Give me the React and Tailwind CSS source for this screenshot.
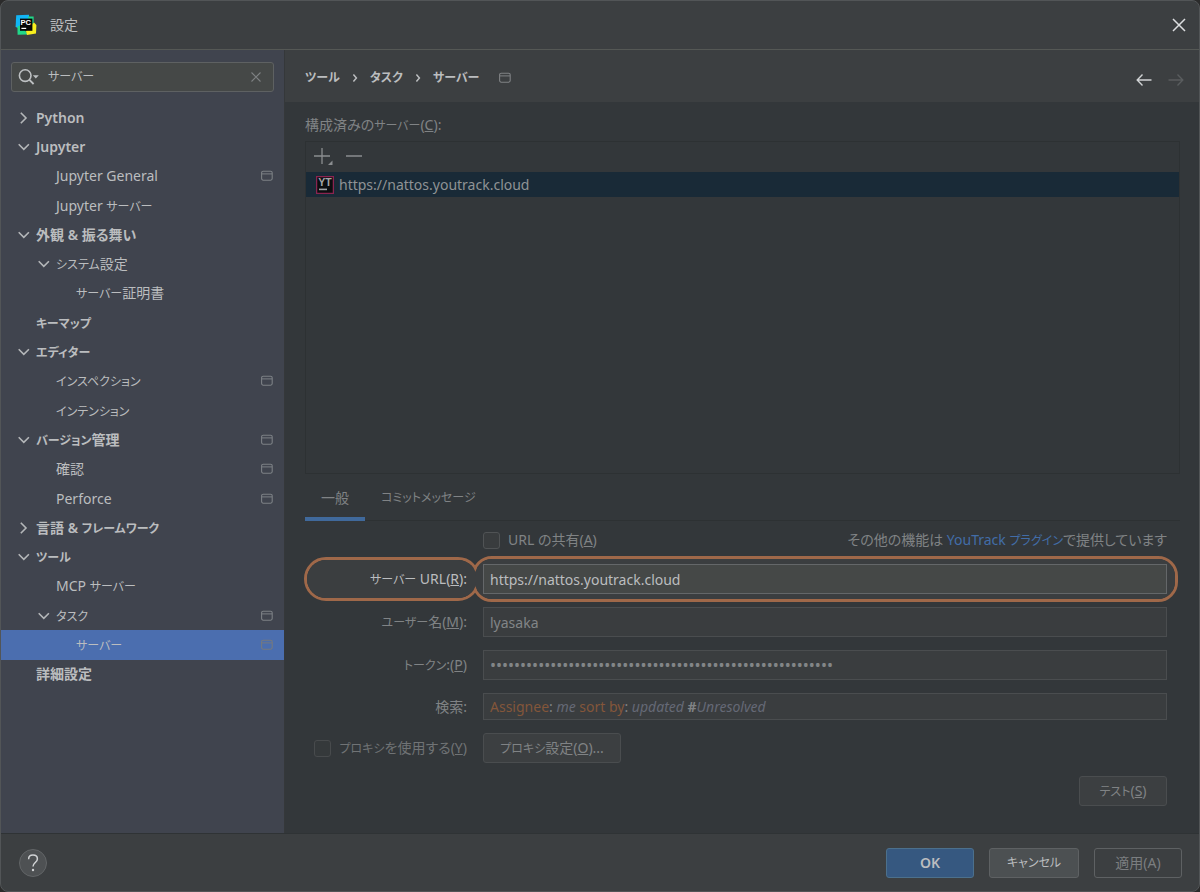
import React from "react";

const TREE = [
  { label: "Python", level: 0, state: "closed", bold: true },
  { label: "Jupyter", level: 0, state: "open", bold: true },
  { label: "Jupyter General", level: 1, project: true },
  { label: "Jupyter サーバー", level: 1 },
  { label: "外観 & 振る舞い", level: 0, state: "open", bold: true },
  { label: "システム設定", level: 1, state: "open" },
  { label: "サーバー証明書", level: 2 },
  { label: "キーマップ", level: 0, bold: true },
  { label: "エディター", level: 0, state: "open", bold: true },
  { label: "インスペクション", level: 1, project: true },
  { label: "インテンション", level: 1 },
  { label: "バージョン管理", level: 0, state: "open", bold: true, project: true },
  { label: "確認", level: 1, project: true },
  { label: "Perforce", level: 1, project: true },
  { label: "言語 & フレームワーク", level: 0, state: "closed", bold: true },
  { label: "ツール", level: 0, state: "open", bold: true },
  { label: "MCP サーバー", level: 1 },
  { label: "タスク", level: 1, state: "open", project: true },
  { label: "サーバー", level: 2, selected: true, project: true },
  { label: "詳細設定", level: 0, bold: true },
];

const INDENT = ["pl-[15px]", "pl-[35px]", "pl-[55px]"];

// Katakana runs are set one step smaller than kanji and Latin text.
function Kana({ children }) {
  return children.split(/([ァ-ヶー]+)/).map((part, index) =>
    index % 2 ? (
      <span key={index} className="text-xs">
        {part}
      </span>
    ) : (
      part
    ),
  );
}

function ProjectIcon({ className }) {
  return (
    <svg className={className} width="12" height="12" viewBox="0 0 12 12" fill="none" stroke="currentColor" aria-hidden="true">
      <rect x="0.6" y="1.2" width="10.6" height="9" rx="1.6" strokeWidth="1.1" />
      <path d="M1 3.9h10" strokeWidth="1" />
    </svg>
  );
}

function TreeArrow({ state }) {
  return (
    <svg width="16" height="16" viewBox="0 0 16 16" fill="none" stroke="#b4b7b9" strokeWidth="1.6" aria-hidden="true">
      {state === "open" && <path d="M2.7 5.2 7.8 10.3 12.9 5.2" />}
      {state === "closed" && <path d="M4.8 2.8 10 8 4.8 13.2" />}
    </svg>
  );
}

function Separator() {
  return (
    <svg width="6" height="10" viewBox="0 0 6 10" fill="none" stroke="#bbbdbf" strokeWidth="1.5" aria-hidden="true">
      <path d="M1.4 1.6 4.4 5 1.4 8.4" />
    </svg>
  );
}

function AppLogo() {
  return (
    <svg width="22" height="22" viewBox="0 0 22 22" aria-hidden="true">
      <path d="M1.2 1.2 14 0.8 14.5 12 4.5 14.5 0.6 13z" fill="#12b5f5" />
      <path d="M13 2.4h5.6V10l-4 4z" fill="#21d789" />
      <path d="M2.4 12.5 6 11l7 9.6-10.4.2z" fill="#21d789" />
      <path d="M19 8.4 21.4 11 21 19.4 12 21 11 17z" fill="#f7ee1e" />
      <rect x="5" y="4.6" width="12.4" height="12.2" fill="#060606" />
      <text x="5.4" y="11" fontSize="7.6" fontWeight="700" fill="#fff" fontFamily="Liberation Sans, sans-serif">PC</text>
      <rect x="6.4" y="13.8" width="4.8" height="1.2" fill="#fff" />
    </svg>
  );
}

function YouTrackLogo() {
  return (
    <svg width="18" height="18" viewBox="0 0 18 18" aria-hidden="true">
      <rect x="0.6" y="0.6" width="16.8" height="16.8" fill="#0c0e10" stroke="#8a2450" strokeWidth="1.3" />
      <text x="2.3" y="10.4" fontSize="10.6" fontWeight="700" fill="#a2a5a8" fontFamily="Liberation Sans, sans-serif">YT</text>
      <rect x="3" y="12.6" width="8" height="1.6" fill="#a2a5a8" />
    </svg>
  );
}

function CheckBox({ id, children, faint }) {
  return (
    <div className="flex items-center gap-2">
      <input
        id={id}
        type="checkbox"
        className={
          faint
            ? "size-[17px] shrink-0 appearance-none rounded-[3px] border border-[#484b4d] bg-[#35393b]"
            : "size-[17px] shrink-0 appearance-none rounded-[3px] border border-[#505355] bg-[#393c3e]"
        }
      />
      <label htmlFor={id} className={faint ? "whitespace-nowrap text-[#707375]" : "whitespace-nowrap text-[#808385]"}>
        {children}
      </label>
    </div>
  );
}

const FIELD =
  "block h-[30px] w-full border border-[#4a4d4f] bg-[#3a3d3f] px-[6px] text-[#828587] outline-none";

export default function App() {
  return (
    <div className="flex min-h-screen flex-col bg-[#2b2b2b] font-['Noto_Sans','Noto_Sans_CJK_JP',sans-serif] text-sm text-[#bbbdbf] [font-feature-settings:'palt']">
      <div className="flex flex-1 flex-col overflow-hidden rounded-lg border border-[#525557] bg-[#3c3f41]">
        <header className="flex h-[49px] shrink-0 items-center justify-between border-b border-[#555855] pr-3 pl-[14px]">
          <div className="flex items-center gap-[13px]">
            <AppLogo />
            <h1>設定</h1>
          </div>
          <button type="button" aria-label="閉じる" className="flex size-4 items-center justify-center">
            <svg width="16" height="16" viewBox="0 0 16 16" fill="none" stroke="#dcdee0" strokeWidth="1.5">
              <path d="M2 2 14 14M14 2 2 14" />
            </svg>
          </button>
        </header>

        <div className="flex flex-1">
          <aside className="w-[284px] shrink-0 border-r border-[#35383a] bg-[#40444e]">
            <div className="px-[10px] pt-3">
              <div className="flex h-[30px] items-center rounded-[3px] border border-[#5e6162] bg-[#454847] pr-[11px] pl-[6px]">
                <svg width="22" height="18" viewBox="0 0 22 18" fill="none" aria-hidden="true">
                  <circle cx="7.2" cy="7.6" r="5.8" stroke="#bdc0c2" strokeWidth="1.6" />
                  <path d="M11.4 11.8 15.6 16" stroke="#bdc0c2" strokeWidth="1.8" />
                  <path d="M14.8 7.2h6l-3 3.2z" fill="#bdc0c2" />
                </svg>
                <input
                  type="text"
                  aria-label="検索"
                  defaultValue="サーバー"
                  className="ml-2 min-w-0 flex-1 bg-transparent text-xs outline-none [font-feature-settings:'palt']"
                />
                <button type="button" aria-label="クリア" className="flex size-3 items-center justify-center">
                  <svg width="12" height="12" viewBox="0 0 12 12" fill="none" stroke="#7d8082" strokeWidth="1.1">
                    <path d="M1.5 1.5 10.5 10.5M10.5 1.5 1.5 10.5" />
                  </svg>
                </button>
              </div>
            </div>
            <ul className="mt-[11px] grid h-[586px] auto-rows-fr">
              {TREE.map((item, index) => (
                <li key={index} className="min-h-0">
                  <button
                    type="button"
                    className={
                      "flex h-full w-full items-center pr-[11px] text-left " +
                      INDENT[item.level] +
                      (item.selected ? " bg-[#4b6eaf]" : "") +
                      (item.bold ? " font-semibold" : "")
                    }
                  >
                    <TreeArrow state={item.state} />
                    <span className="ml-1 flex-1">
                      <Kana>{item.label}</Kana>
                    </span>
                    {item.project && <ProjectIcon className={item.selected ? "text-[#75797f]" : "text-[#7c8085]"} />}
                  </button>
                </li>
              ))}
            </ul>
          </aside>

          <main className="flex min-w-0 flex-1 flex-col bg-[#33373a]">
            <div className="flex h-[52px] shrink-0 items-center justify-between bg-[#3c3f41] pt-1 pr-[15px] pl-5">
              <nav className="flex items-center gap-3 text-xs font-semibold">
                <a href="#tools">ツール</a>
                <Separator />
                <a href="#tasks">タスク</a>
                <Separator />
                <a href="#servers">サーバー</a>
                <ProjectIcon className="ml-2 text-[#7f8284]" />
              </nav>
              <div className="flex gap-4 pt-1">
                <button type="button" aria-label="戻る">
                  <svg width="16" height="14" viewBox="0 0 16 14" fill="none" stroke="#d0d2d4" strokeWidth="1.4">
                    <path d="M15.5 7H1.5M6.5 1.6 1.2 7 6.5 12.4" />
                  </svg>
                </button>
                <button type="button" aria-label="進む">
                  <svg width="16" height="14" viewBox="0 0 16 14" fill="none" stroke="#595c5e" strokeWidth="1.4">
                    <path d="M0.5 7H14.5M9.5 1.6 14.8 7 9.5 12.4" />
                  </svg>
                </button>
              </div>
            </div>

            <div className="flex flex-1 flex-col pt-[11px] pr-[19px] pb-[27px] pl-5 text-[#808385]">
              <h2 className="h-[28px] leading-6">
                <Kana>構成済みのサーバー</Kana>(<u>C</u>):
              </h2>
              <section className="flex min-h-[200px] flex-1 flex-col border border-[#2d3133]">
                <div className="flex h-[30px] items-center gap-3 pb-[2px] pl-2">
                  <button type="button" aria-label="追加">
                    <svg width="20" height="20" viewBox="0 0 20 20" fill="none" stroke="#8b8e90" strokeWidth="1.3">
                      <path d="M0 10h16M8 2v16" />
                      <path d="M18.5 14.5v4.5H14z" fill="#8b8e90" stroke="none" />
                    </svg>
                  </button>
                  <button type="button" aria-label="削除">
                    <svg width="16" height="16" viewBox="0 0 16 16" fill="none" stroke="#8b8e90" strokeWidth="1.3">
                      <path d="M0 8h16" />
                    </svg>
                  </button>
                </div>
                <ul>
                  <li className="flex h-[25px] items-center gap-[5px] bg-[#192a37] pl-[10px] text-[#8f9395]">
                    <YouTrackLogo />
                    <span>https://nattos.youtrack.cloud</span>
                  </li>
                </ul>
              </section>

              <div role="tablist" className="mt-[5px] flex h-[42px] border-b border-[#2d3133]">
                <button type="button" role="tab" aria-selected="true" className="-mb-px border-b-4 border-[#40699b] px-4">
                  一般
                </button>
                <button type="button" role="tab" aria-selected="false" className="-mb-px border-b-4 border-transparent px-4 text-xs">
                  コミットメッセージ
                </button>
              </div>

              <form className="grid grid-cols-[162px_minmax(0,1fr)] items-center gap-x-4 gap-y-[13px] pt-2 pr-[13px]">
                <div className="col-start-2 flex h-[22px] items-center justify-between">
                  <CheckBox id="share">
                    URL の共有(<u>A</u>)
                  </CheckBox>
                  <p>
                    その他の機能は{" "}
                    <a href="#plugin" className="text-[#426da8]">
                      <Kana>YouTrack プラグイン</Kana>
                    </a>
                    で提供しています
                  </p>
                </div>

                <div className="relative col-span-2 grid grid-cols-subgrid items-center">
                  <div className="pointer-events-none absolute -inset-y-[7px] -left-px w-[176px] rounded-full border-[3px] border-[#9f6849]" />
                  <div className="pointer-events-none absolute -inset-y-2 -right-[11px] left-[167px] rounded-[20px] border-[3px] border-[#9f6849]" />
                  <div className="pointer-events-none absolute -inset-y-1 left-[2px] w-[170px] rounded-full bg-[#3b3e40]" />
                  <div className="pointer-events-none absolute -inset-y-[5px] -right-2 left-[170px] rounded-[17px] bg-[#3b3e40]" />
                  <label htmlFor="url" className="relative text-right text-[#bbbdbf]">
                    <Kana>サーバー URL</Kana>(<u>R</u>):
                  </label>
                  <input
                    id="url"
                    type="text"
                    defaultValue="https://nattos.youtrack.cloud"
                    className="relative block h-[30px] w-full border border-[#646769] bg-[#454847] px-[6px] text-[#bbbdbf] outline-none"
                  />
                </div>

                <label htmlFor="user" className="text-right">
                  <Kana>ユーザー名</Kana>(<u>M</u>):
                </label>
                <input id="user" type="text" defaultValue="lyasaka" className={FIELD} />

                <label htmlFor="token" className="text-right">
                  <Kana>トークン</Kana>:(<u>P</u>)
                </label>
                <input id="token" type="password" defaultValue={"0".repeat(57)} className={FIELD + " text-base"} />

                <span id="query-label" className="text-right">
                  検索:
                </span>
                <div
                  role="textbox"
                  aria-labelledby="query-label"
                  contentEditable
                  suppressContentEditableWarning
                  className="h-[27px] border border-[#4a4d4f] bg-[#3a3d3f] px-[6px] leading-[26px] text-[#808385] outline-none"
                >
                  <span className="text-[#83563a]">Assignee</span>: <i className="text-[#656976]">me</i>{" "}
                  <span className="text-[#83563a]">sort by</span>: <i className="text-[#656976]">updated</i>{" "}
                  <b>#</b>
                  <i className="text-[#656976]">Unresolved</i>
                </div>

                <div className="flex justify-end">
                  <CheckBox id="proxy" faint>
                    <Kana>プロキシを使用する</Kana>(<u>Y</u>)
                  </CheckBox>
                </div>
                <div>
                  <button type="button" className="h-[30px] w-[138px] rounded-[3px] border border-[#4a4d4f] bg-[#3c3f41]">
                    <Kana>プロキシ設定</Kana>(<u>O</u>)...
                  </button>
                </div>

                <div className="col-start-2 flex justify-end">
                  <button type="button" className="h-[30px] w-[88px] rounded-[3px] border border-[#4a4d4f] bg-[#3c3f41]">
                    <Kana>テスト</Kana>(<u>S</u>)
                  </button>
                </div>
              </form>
            </div>
          </main>
        </div>

        <footer className="flex h-[58px] shrink-0 items-center justify-between border-t border-[#2f3335] pr-[17px] pl-[18px]">
          <button
            type="button"
            aria-label="ヘルプ"
            className="flex size-7 items-center justify-center rounded-full border border-[#626567] bg-[#4e5153]"
          >
            <svg width="14" height="18" viewBox="0 0 14 18" fill="none" stroke="#d0d2d4" strokeWidth="1.5" aria-hidden="true">
              <path d="M2.6 5.2C2.6 2.6 4.5 1 7 1s4.4 1.6 4.4 3.9c0 3.3-4.4 3.9-4.4 7.5" />
              <circle cx="7" cy="16" r="1.2" fill="#d0d2d4" stroke="none" />
            </svg>
          </button>
          <div className="flex gap-[15px]">
            <button type="button" className="h-[30px] w-[88px] rounded-[3px] border border-[#4c708c] bg-[#365880] font-semibold">
              OK
            </button>
            <button type="button" className="h-[30px] w-[90px] rounded-[3px] border border-[#5e6163] bg-[#4c5052] text-xs">
              キャンセル
            </button>
            <button type="button" disabled className="h-[30px] w-[88px] rounded-[3px] border border-[#5e6163] text-[#7b7e80]">
              適用(A)
            </button>
          </div>
        </footer>
      </div>
    </div>
  );
}
